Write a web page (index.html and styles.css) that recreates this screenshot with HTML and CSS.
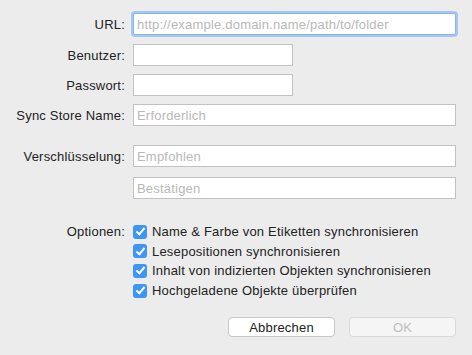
FILE: index.html
```html
<!DOCTYPE html>
<html>

<head>
    <title>Sync Store</title>
    <link rel="stylesheet" href="styles.css">
</head>

<body>
    <form class="sync-form">
        <div class="row row-url">
            <label class="label" for="url">URL:</label>
            <input class="field field-wide focused" type="text" id="url" placeholder="http://example.domain.name/path/to/folder">
        </div>
        <div class="row row-user">
            <label class="label" for="user">Benutzer:</label>
            <input class="field field-short" type="text" id="user">
        </div>
        <div class="row row-pass">
            <label class="label" for="pass">Passwort:</label>
            <input class="field field-short" type="password" id="pass">
        </div>
        <div class="row row-store">
            <label class="label" for="store">Sync Store Name:</label>
            <input class="field field-wide" type="text" id="store" placeholder="Erforderlich">
        </div>
        <div class="row row-crypt">
            <label class="label" for="crypt">Verschlüsselung:</label>
            <input class="field field-wide" type="password" id="crypt" placeholder="Empfohlen">
        </div>
        <div class="row row-confirm">
            <span class="label"></span>
            <input class="field field-wide" type="password" id="confirm" placeholder="Bestätigen">
        </div>

        <div class="options">
            <span class="label option-label">Optionen:</span>
            <div class="option-list">
                <div class="option"><span class="check"></span>Name &amp; Farbe von Etiketten synchronisieren</div>
                <div class="option"><span class="check"></span>Lesepositionen synchronisieren</div>
                <div class="option"><span class="check"></span>Inhalt von indizierten Objekten synchronisieren</div>
                <div class="option"><span class="check"></span>Hochgeladene Objekte überprüfen</div>
            </div>
        </div>

        <div class="buttons">
            <button type="button" class="btn">Abbrechen</button>
            <button type="button" class="btn btn-disabled">OK</button>
        </div>
    </form>
</body>

</html>
```

FILE: styles.css
```css
body {
    margin: 0;
    background-color: #ececec;
    font-family: 'Liberation Sans', Arial, sans-serif;
    font-size: 13px;
    letter-spacing: 0.2px;
    color: #222;
}

.sync-form {
    padding: 13px 16px 0 0;
}

.row {
    display: flex;
    align-items: center;
    height: 22px;
}

.row-user {
    margin-top: 9px;
}

.row-pass,
.row-store {
    margin-top: 8px;
}

.row-crypt {
    margin-top: 19px;
}

.row-confirm {
    margin-top: 10px;
}

.label {
    width: 125px;
    flex-shrink: 0;
    margin-right: 8px;
    text-align: right;
}

.field {
    box-sizing: border-box;
    height: 22px;
    border: 1px solid #c2c2c2;
    background-color: #fff;
    padding: 0 3px;
    font-family: 'Liberation Sans', Arial, sans-serif;
    font-size: 13px;
    letter-spacing: 0.2px;
    color: #222;
    outline: none;
}

.field::placeholder {
    color: #b8b8b8;
}

.field-wide {
    width: 323px;
}

.field-short {
    width: 160px;
}

.focused {
    border-color: #8bb6e4;
    box-shadow: 0 0 0 2px #a6c8ee;
    border-radius: 2px;
}

.options {
    display: flex;
    margin-top: 23px;
}

.option-label {
    line-height: 20px;
}

.option {
    display: flex;
    align-items: center;
    height: 19.6px;
}

.check {
    position: relative;
    width: 14px;
    height: 14px;
    margin-right: 5px;
    border-radius: 3px;
    background-color: #3d95f5;
    flex-shrink: 0;
}

.check::after {
    content: "";
    position: absolute;
    left: 4.5px;
    top: 1.5px;
    width: 3px;
    height: 7px;
    border: solid #fff;
    border-width: 0 2px 2px 0;
    transform: rotate(40deg);
}

.buttons {
    display: flex;
    justify-content: flex-end;
    gap: 14px;
    margin-top: 17px;
}

.btn {
    width: 107px;
    height: 20px;
    padding: 0;
    background-color: #fff;
    border: 1px solid #c6c6c6;
    border-radius: 4px;
    font-family: 'Liberation Sans', Arial, sans-serif;
    font-size: 13px;
    letter-spacing: 0.2px;
    color: #222;
}

.btn-disabled {
    background-color: #f5f5f5;
    border-color: #d9d9d9;
    color: #bdbdbd;
}
```
